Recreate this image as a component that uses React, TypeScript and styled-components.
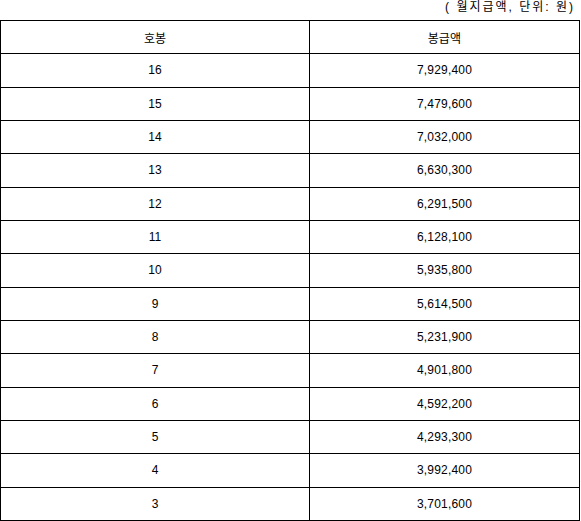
import React from "react";
import { createGlobalStyle, styled } from "styled-components";

const GlobalStyle = createGlobalStyle`
  html, body {
    margin: 0;
    padding: 0;
    background: #fff;
  }
  body {
    font-family: "Liberation Sans", "Noto Sans CJK KR", sans-serif;
    font-size: 12px;
    color: #000;
  }
`;

const Page = styled.div`
  width: 581px;
  display: flex;
  flex-direction: column;
`;

const Caption = styled.div`
  height: 20px;
  line-height: 14px;
  text-align: right;
  padding-right: 6px;
  letter-spacing: 2px;
  white-space: pre;
`;

const Table = styled.table`
  width: 580px;
  border-collapse: collapse;
  table-layout: fixed;
`;

const Row = styled.tr`
  height: 33.33px;
`;

const Cell = styled.td<{ $first?: boolean }>`
  border: 1px solid #000;
  padding: 0;
  text-align: center;
  vertical-align: middle;
  width: ${(p) => (p.$first ? "308px" : "auto")};
  letter-spacing: ${(p) => (p.$first ? "0" : "0.2px")};
`;

const rows: [string, string][] = [
  ["16", "7,929,400"],
  ["15", "7,479,600"],
  ["14", "7,032,000"],
  ["13", "6,630,300"],
  ["12", "6,291,500"],
  ["11", "6,128,100"],
  ["10", "5,935,800"],
  ["9", "5,614,500"],
  ["8", "5,231,900"],
  ["7", "4,901,800"],
  ["6", "4,592,200"],
  ["5", "4,293,300"],
  ["4", "3,992,400"],
  ["3", "3,701,600"],
];

export default function App() {
  return (
    <Page>
      <GlobalStyle />
      <Caption>( 월지급액, 단위: 원)</Caption>
      <Table>
        <tbody>
          <Row>
            <Cell $first>호봉</Cell>
            <Cell>봉급액</Cell>
          </Row>
          {rows.map(([step, pay]) => (
            <Row key={step}>
              <Cell $first>{step}</Cell>
              <Cell>{pay}</Cell>
            </Row>
          ))}
        </tbody>
      </Table>
    </Page>
  );
}
